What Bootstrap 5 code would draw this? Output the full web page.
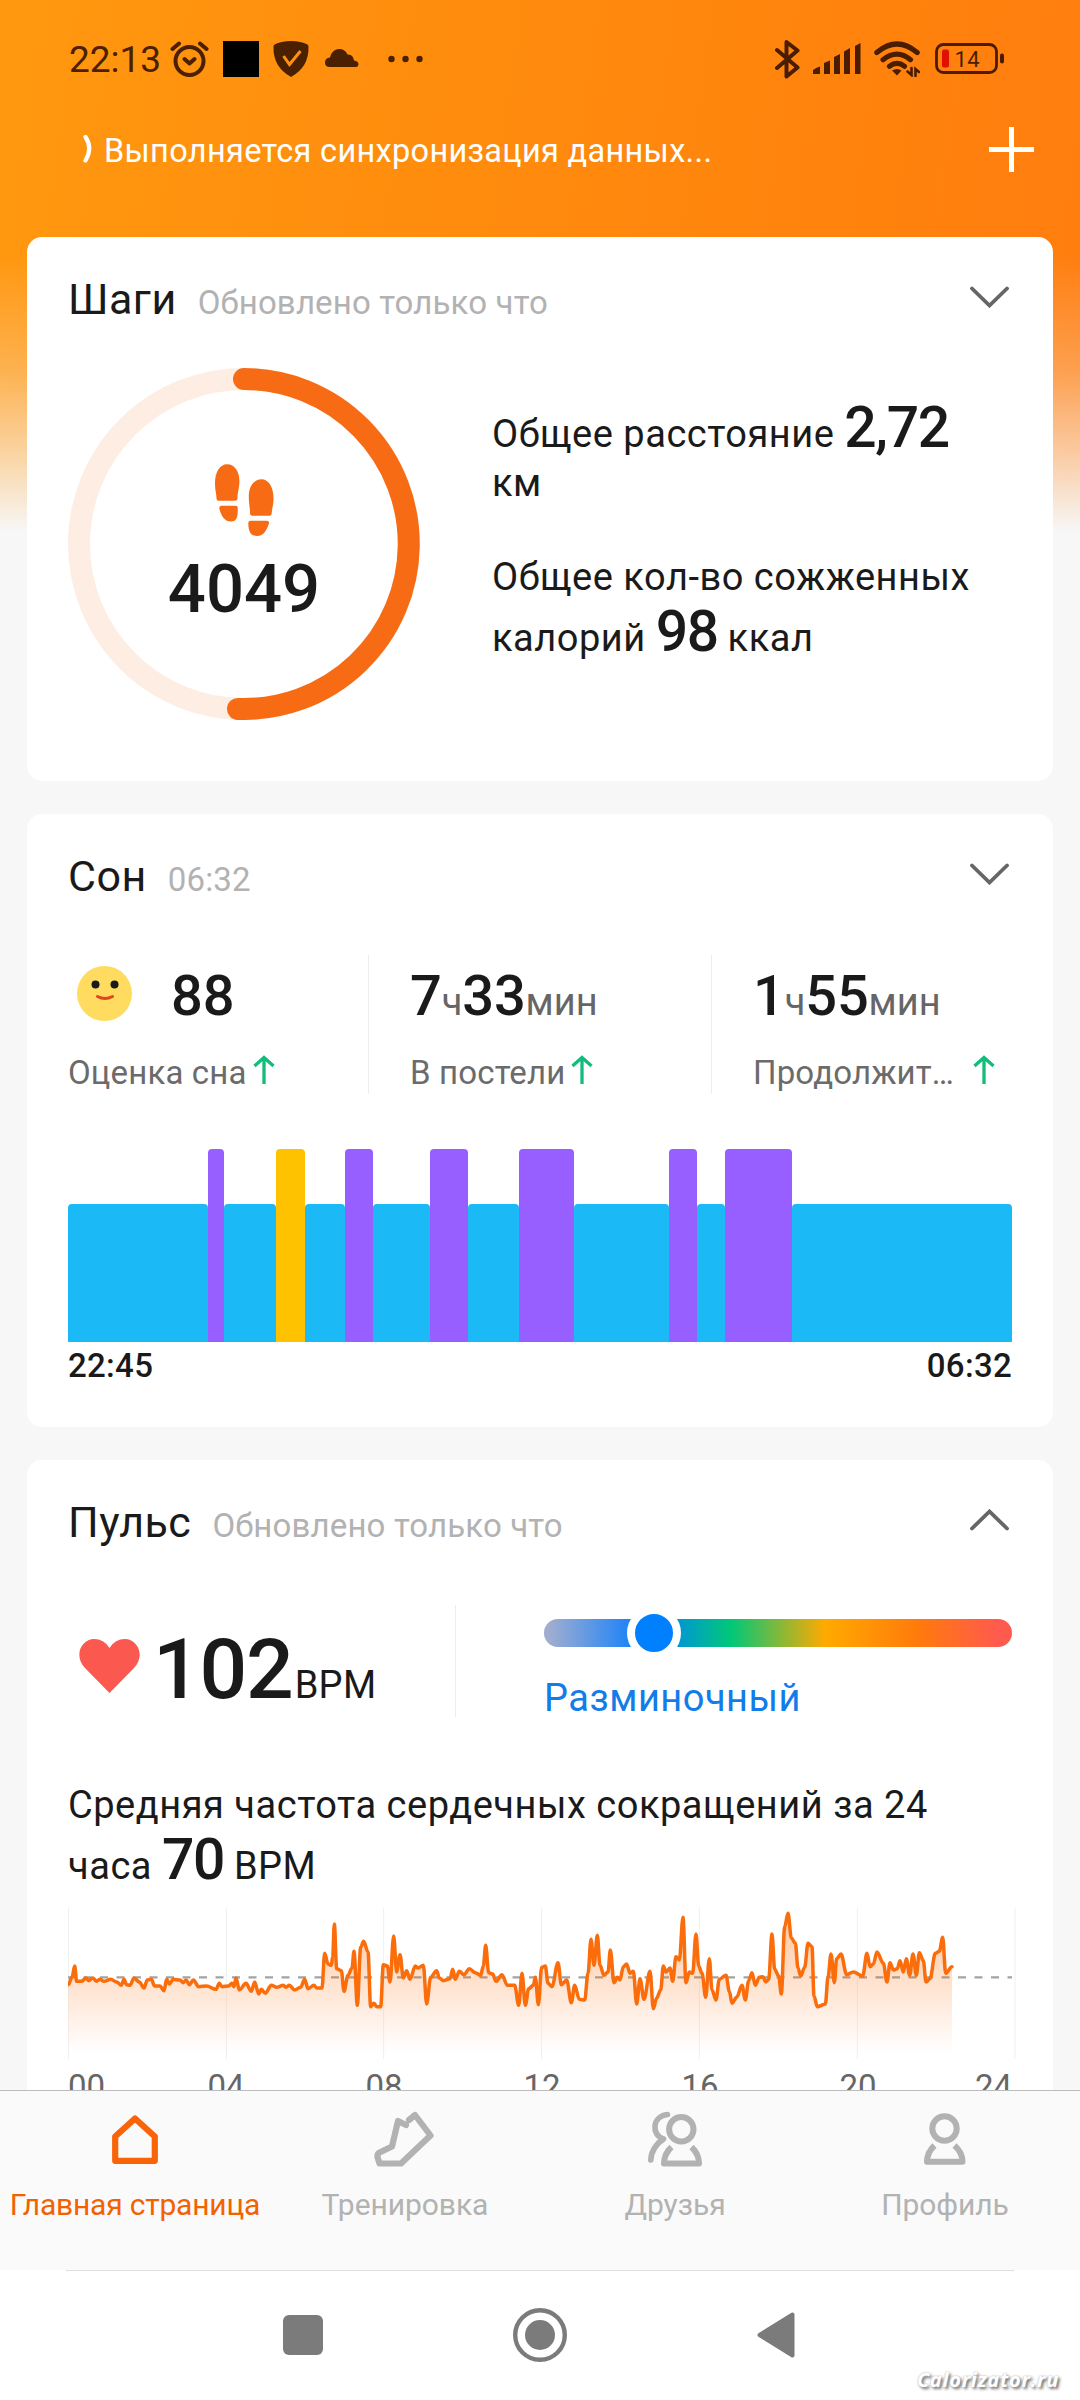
<!DOCTYPE html>
<html lang="ru">
<head>
<meta charset="utf-8">
<meta name="viewport" content="width=device-width, initial-scale=1">
<title>Главная страница</title>
<link href="https://cdn.jsdelivr.net/npm/bootstrap@5.3.0/dist/css/bootstrap.min.css" rel="stylesheet">
<style>
  body { font-family: Roboto, "Noto Sans", sans-serif; color: #1a1a1a; background: #f7f7f7; }
  svg { display: block; flex: none; }
  .phone { width: 1080px; height: 2400px; background: #f7f7f7; }
  .screen { height: 2090px;
    background: linear-gradient(180deg, rgba(247,247,247,0) 255px, rgba(247,247,247,.28) 370px, rgba(247,247,247,.62) 450px, #f7f7f7 532px), linear-gradient(98deg, #ff980f 0, #ff870d 50%, #ff780f 100%); }
  .statusbar { height: 118px; padding-left: 69px; color: #4a2000; }
  .clock { width: 101px; font-size: 37px; font-weight: 450; line-height: 44px; padding-top: 2px; }
  .charge { font-size: 22px; line-height: 30px; letter-spacing: .5px; }
  .sync { height: 62px; margin-bottom: 57px; padding: 0 46px 0 83px; color: #fff; }
  .sync-label { font-size: 32.5px; line-height: 40px; padding: 3px 0 0 11px; letter-spacing: .32px; }
  .panel { width: 1026px; margin: 0 27px 33px; padding: 27px 41px 0; border: 0; border-radius: 15px; background: #fff; color: #1a1a1a; }
  .panel-steps { height: 544px; } .panel-sleep { height: 613px; } .panel-pulse { height: 800px; border-radius: 15px 15px 0 0; }
  .head { height: 70px; }
  .title { font-size: 43px; line-height: 70px; margin: 0; font-weight: 400; letter-spacing: .5px; }
  .updated { font-size: 33px; color: #b2b2b2; margin-left: 21px; letter-spacing: .15px; }
  .chev { margin: 22px 3px 0 auto; }
  .ring { width: 352px; height: 352px; }
  .steps-num { font-size: 67px; font-weight: 500; line-height: 67px; margin-top: 20px; }
  .txt { font-size: 38px; line-height: 61px; margin: 0; letter-spacing: .52px; }
  .txt b { font-size: 57px; line-height: 0; font-weight: 500; letter-spacing: -1.4px; }
  .txt-km { line-height: 49px; margin: 42px 0 39px; }
  .stats { height: 139px; margin-top: 44px; }
  .stat { padding: 11px 0 0 41px; }
  .stat + .stat { border-left: 1px solid #ededed; }
  .val { font-size: 56px; font-weight: 500; line-height: 60px; height: 60px; white-space: nowrap; letter-spacing: -.2px; }
  .val small { font-size: 38px; font-weight: 400; color: #666; letter-spacing: 0; }
  .lbl { font-size: 33px; line-height: 40px; margin-top: 27px; color: #6b6b6b; white-space: nowrap; letter-spacing: .15px; }
  .phases { height: 193px; margin-top: 55px; }
  .ph { height: 138px; border-radius: 4px 4px 0 0; background: #1cb9f7; }
  .ph-rem { height: 193px; background: #975fff; }
  .ph-wake { height: 193px; background: #ffc200; }
  .times { font-size: 33px; font-weight: 500; line-height: 48px; letter-spacing: .3px; }
  .beat { height: 112px; margin-top: 48px; }
  .beat-now { width: 388px; border-right: 1px solid #ededed; }
  .bpm { font-size: 84px; font-weight: 500; line-height: 84px; margin-top: 23px; white-space: nowrap; letter-spacing: -1.2px; }
  .bpm small { font-size: 38px; font-weight: 400; letter-spacing: .3px; margin-left: 2px; }
  .zone { height: 28px; margin-top: 14px; border-radius: 14px;
    background: linear-gradient(90deg, #a0add0 1%, #1380fb 20%, #0080ff 23%, #00c878 40%, #ffaa00 60%, #ff7a0c 80%, #ff5a4e 97%); }
  .knob { width: 54px; height: 54px; left: 83px; top: -13px; border: 8px solid #fff; border-radius: 50%; background: #0080ff; }
  .zone-name { font-size: 38px; line-height: 50px; margin-top: 26px; color: #127ce8; letter-spacing: .5px; }
  .hours { width: 948px; font-size: 33px; line-height: 40px; margin-top: 7px; color: #666; }
  .hours span { width: 158px; text-align: center; }
  .hours span:first-child { width: 79px; text-align: left; }
  .hours span:last-child { width: 75px; text-align: right; }
  .tabs { height: 180px; background: #fafafa; border-top: 1px solid #bdbdbd; }
  .tabs a { width: 270px; padding-top: 18px; color: #b2b2b2; font-size: 30px; line-height: 40px; text-decoration: none; white-space: nowrap; letter-spacing: -.05px; }
  .tabs a.active { color: #f26200; letter-spacing: -.2px; }
  .tab-name { margin-top: 16px; }
  .sysnav { height: 130px; background: #fff; }
  .rule { width: 948px; height: 1px; background: #dedede; }
  .stamp { right: 21px; bottom: 8px; font: italic 700 20px/24px "Open Sans", sans-serif; letter-spacing: .75px; color: #fff; text-shadow: 0 0 2px #aaa, 2px 2px 3px #666; }
</style>
</head>
<body>
<div class="phone overflow-hidden">
  <main class="screen overflow-hidden">
    <div class="statusbar d-flex align-items-center">
      <span class="clock">22:13</span>
      <svg width="39" height="36" viewBox="0 0 39 36" fill="none" stroke="#4a2000" stroke-width="4" stroke-linecap="round" stroke-linejoin="round"><circle cx="19.500" cy="20" r="14"/><path d="M14.500 18l5 4.500 5-4.500M2.500 8L9 2.500M36.500 8L30 2.500"/></svg>
      <svg width="36" height="36" style="margin-left:14px"><path d="M0 0h36v36H0z"/></svg>
      <svg width="36" height="36" viewBox="0 0 36 36" style="margin-left:14px"><path d="M18 0Q28 0 34.500 3.500 35.500 4 35.500 6 36 26 18 36 0 26 .5 6 .5 4 1.500 3.500 8 0 18 0z" fill="#4a2000"/><path d="M10.500 15l6 8.500L27.500 10" fill="none" stroke="#ff9010" stroke-width="3"/></svg>
      <svg width="34" height="36" viewBox="0 0 34 36" style="margin-left:16px"><path d="M5 26Q0 26 0 21.500 0 17 5 16.500 7 8 14.500 8 20 8 22.500 13.500 28 13 29 19.500 33.500 20 33.500 23.500 33 26 31 26z" fill="#4a2000"/></svg>
      <svg width="36" height="8" viewBox="0 0 36 8" style="margin-left:29px" fill="#4a2000"><circle cx="3.500" cy="4" r="3.200"/><circle cx="17.500" cy="4" r="3.200"/><circle cx="31.500" cy="4" r="3.200"/></svg>
      <svg width="25" height="40" viewBox="0 0 25 40" style="margin-left:351px" fill="none" stroke="#4a1c00" stroke-width="4" stroke-linecap="round" stroke-linejoin="round"><path d="M2 11L22.500 28.500 11.500 37.500V3L22.500 11.500 2 29"/></svg>
      <svg width="48" height="32" viewBox="0 0 48 32" style="margin-left:13px" fill="#4a1c00"><path d="M0 31v-4q4-3 7-3.500V31zM11 31V20l6-2.500V31zM21 31V14l6-3v20zM31 31V8.500l6-3.500v26zM42 31V3l5.500-3v31z"/></svg>
      <svg width="46" height="36" viewBox="0 0 46 36" style="margin-left:13px" fill="none" stroke="#4a1c00" stroke-width="5.200" stroke-linecap="round"><path d="M2.800 11.500Q23-5.500 43.200 11.500M9 18.700Q23 7.500 36.500 18.700M15.500 25.200Q23 19.500 30.500 25.200"/><path d="M18 29.500q5-3 9.500 0L23 34.500z" fill="#4a1c00" stroke="none"/><path d="M37.500 27v7l-4-3.500M41.500 35v-7l3.500 3" stroke-width="2.600"/></svg>
      <svg width="70" height="32" viewBox="0 0 70 32" style="margin-left:15px"><rect x="1.500" y="1.500" width="60" height="28" rx="7" fill="none" stroke="#4a1c00" stroke-width="2.800"/><rect x="65" y="10.500" width="4" height="10" rx="2" fill="#4a1c00"/><rect x="7" y="6.500" width="7" height="18" rx="2" fill="#e01000"/><text x="19.500" y="23.500" class="charge" fill="#4a1c00">14</text></svg>
    </div>
    <div class="sync d-flex align-items-center">
      <svg width="10" height="28" viewBox="0 0 10 28"><path d="M2.500 2Q10 13 2.500 25.500" fill="none" stroke="#fff" stroke-width="4.200" stroke-linecap="round"/></svg>
      <span class="sync-label">Выполняется синхронизация данных...</span>
      <svg class="ms-auto" width="45" height="45" viewBox="0 0 45 45"><path d="M22.500 0v45M0 22.500h45" stroke="#fff" stroke-width="5"/></svg>
    </div>

    <section class="card panel panel-steps">
      <div class="head d-flex">
        <div class="d-flex align-items-baseline"><h2 class="title">Шаги</h2><span class="updated">Обновлено только что</span></div>
        <svg class="chev" width="39" height="22" viewBox="0 0 39 22"><path d="M2 2.500l17.500 17L37 2.500" fill="none" stroke="#666" stroke-width="3.800" stroke-linecap="round"/></svg>
      </div>
      <div class="d-flex" style="margin-top:34px">
        <div class="ring position-relative flex-shrink-0">
          <svg class="position-absolute top-0 start-0" width="352" height="352" viewBox="0 0 352 352" fill="none" stroke-width="22"><circle cx="176" cy="176" r="165" stroke="#feede3"/><path d="M176 11A165 165 0 1 1 170 340.900" stroke="#f76b14" stroke-linecap="round"/></svg>
          <div class="d-flex flex-column align-items-center" style="padding-top:96px">
            <svg width="59" height="72" viewBox="0 0 59 72" fill="#f76b14"><path d="M12 0.300C20 .3 24.400 8 24.400 17 24.400 25 22.500 28 22.500 34Q22.500 36.700 20 36.700H3.500Q1.500 36.700 1.500 34.500C1.500 29 0 27 0 19 0 8 5 .3 12 .3zM6.500 41.800H20.500Q22.800 41.800 22.800 44C22.800 53 22 57.500 16 57.500 9 57.500 6 51 4.300 44.500Q4 41.800 6.500 41.800z"/><path d="M46.500 15.300C38.500 15.300 33.800 23 33.800 32 33.800 40 35 43 35 49Q35 51.700 37.500 51.700H54.500Q56.500 51.700 56.700 49.500C57 44 58.500 42 58.500 34 58.500 23 53.500 15.300 46.500 15.300zM52 56.800H35.500Q33.300 56.800 33.300 59C33.300 68 36 72 42 72 49 72 51.500 66 54 59.500Q54.500 56.800 52 56.800z"/></svg>
            <div class="steps-num">4049</div>
          </div>
        </div>
        <div style="padding-left:72px">
          <p class="txt txt-km">Общее расстояние <b>2,72</b><br>км</p>
          <p class="txt">Общее кол-во сожженных<br>калорий <b>98</b> ккал</p>
        </div>
      </div>
    </section>

    <section class="card panel panel-sleep">
      <div class="head d-flex">
        <div class="d-flex align-items-baseline"><h2 class="title">Сон</h2><span class="updated">06:32</span></div>
        <svg class="chev" width="39" height="22" viewBox="0 0 39 22"><path d="M2 2.500l17.500 17L37 2.500" fill="none" stroke="#666" stroke-width="3.800" stroke-linecap="round"/></svg>
      </div>
      <div class="stats d-flex">
        <div class="stat ps-0" style="width:300px">
          <div class="val d-flex"><svg width="55" height="55" viewBox="0 0 55 55" style="margin:0 39px 0 9px"><circle cx="27.500" cy="27.500" r="27.500" fill="#ffdc60"/><circle cx="18.500" cy="18.500" r="4" fill="#1a1a1a"/><circle cx="37.500" cy="18.500" r="4" fill="#1a1a1a"/><path d="M20.500 30.500q7.500 4 15 0" fill="none" stroke="#e0451f" stroke-width="3" stroke-linecap="round"/></svg>88</div>
          <div class="lbl d-flex">Оценка сна<svg style="margin-left:6px" width="22" height="32" viewBox="0 0 22 32"><path d="M11 31V5M1.500 13L11 4.500 20.500 13" fill="none" stroke="#12bd7c" stroke-width="3.300"/></svg></div>
        </div>
        <div class="stat" style="width:343px">
          <div class="val">7<small>ч</small>33<small>мин</small></div>
          <div class="lbl d-flex">В постели<svg style="margin-left:6px" width="22" height="32" viewBox="0 0 22 32"><path d="M11 31V5M1.500 13L11 4.500 20.500 13" fill="none" stroke="#12bd7c" stroke-width="3.300"/></svg></div>
        </div>
        <div class="stat" style="width:300px">
          <div class="val">1<small>ч</small>55<small>мин</small></div>
          <div class="lbl d-flex">Продолжит…<svg style="margin-left:19px" width="22" height="32" viewBox="0 0 22 32"><path d="M11 31V5M1.500 13L11 4.500 20.500 13" fill="none" stroke="#12bd7c" stroke-width="3.300"/></svg></div>
        </div>
      </div>
      <div class="phases d-flex align-items-end">
        <i class="ph" style="width:139.500px"></i><i class="ph ph-rem" style="width:16.500px"></i><i class="ph" style="width:52px"></i><i class="ph ph-wake" style="width:28.500px"></i><i class="ph" style="width:40.500px"></i><i class="ph ph-rem" style="width:28px"></i><i class="ph" style="width:57px"></i><i class="ph ph-rem" style="width:38px"></i><i class="ph" style="width:51px"></i><i class="ph ph-rem" style="width:54.500px"></i><i class="ph" style="width:95px"></i><i class="ph ph-rem" style="width:28.500px"></i><i class="ph" style="width:28px"></i><i class="ph ph-rem" style="width:67px"></i><i class="ph" style="width:220px"></i>
      </div>
      <div class="times d-flex justify-content-between"><span>22:45</span><span>06:32</span></div>
    </section>

    <section class="card panel panel-pulse">
      <div class="head d-flex">
        <div class="d-flex align-items-baseline"><h2 class="title">Пульс</h2><span class="updated">Обновлено только что</span></div>
        <svg class="chev" width="39" height="22" viewBox="0 0 39 22"><path d="M2 19.500l17.500-17L37 19.500" fill="none" stroke="#666" stroke-width="3.800" stroke-linecap="round"/></svg>
      </div>
      <div class="beat d-flex">
        <div class="beat-now d-flex">
          <svg width="61" height="54" viewBox="0 0 61 54" style="margin:34px 13px 0 11px"><path d="M30.500 54L6 29C-6 16 3 0 15 0Q25 0 30.500 9 36 0 46 0C58 0 67 16 55 29z" fill="#fb5850"/></svg>
          <div class="bpm">102<small>BPM</small></div>
        </div>
        <div class="flex-grow-1" style="padding-left:88px">
          <div class="zone position-relative"><div class="knob position-absolute"></div></div>
          <div class="zone-name">Разминочный</div>
        </div>
      </div>
      <p class="txt" style="margin-top:58px">Средняя частота сердечных сокращений за 24<br>часа <b>70</b> BPM</p>
      <svg style="margin-top:8px" width="948" height="155" viewBox="54 45 2844 465">
        <defs><linearGradient id="fade" gradientUnits="userSpaceOnUse" x1="0" y1="70" x2="0" y2="490"><stop offset="0" stop-color="#ff6a00" stop-opacity=".38"/><stop offset="1" stop-color="#ff6a00" stop-opacity="0"/></linearGradient></defs>
        <path d="M55.500 52V507M529 52V507M1001 52V507M1475 52V507M1948 52V507M2422 52V507M2895 52V507" stroke="#f0f0f0" stroke-width="3"/>
        <path d="M51 262H2886" stroke="#a3a3a3" stroke-width="7" stroke-dasharray="24 25.500"/>
        <path id="area" fill="url(#fade)"/>
        <path id="trace" fill="none" stroke="#fb6c0a" stroke-width="10.500" stroke-linejoin="round" stroke-linecap="round"/>
      </svg>
      <div class="hours d-flex"><span>00</span><span>04</span><span>08</span><span>12</span><span>16</span><span>20</span><span>24</span></div>
    </section>
  </main>

  <nav class="tabs d-flex">
    <a class="active d-flex flex-column align-items-center" href="#"><svg width="64" height="60" viewBox="0 0 64 60" fill="none" stroke="#f96408" stroke-width="6.200" stroke-linejoin="round"><path d="M32 9.500L12.200 27.500V51.800H51.800V27.500z"/></svg><span class="tab-name">Главная страница</span></a>
    <a class="d-flex flex-column align-items-center" href="#"><svg width="64" height="60" viewBox="0 0 64 60" fill="none" stroke="#b2b2b2" stroke-width="6.200" stroke-linejoin="round" stroke-linecap="round"><path d="M33 16L25 12 19 37.500 6.500 43.500Q4 45 4.500 48L6.500 54.500H28L57.500 26.500 42 6 36 11"/></svg><span class="tab-name">Тренировка</span></a>
    <a class="d-flex flex-column align-items-center" href="#"><svg width="64" height="60" viewBox="0 0 64 60" fill="none" stroke="#b2b2b2" stroke-width="6" stroke-linejoin="round"><circle cx="38.300" cy="20.300" r="12.200"/><path d="M28.500 38Q21 45 21 54.500H56Q56 45 48.500 38"/><path d="M24.500 5.500C9 7 8 26 20.500 30 14 34 8 42 7.800 51" stroke-linecap="round" stroke-width="5.600"/></svg><span class="tab-name">Друзья</span></a>
    <a class="d-flex flex-column align-items-center" href="#"><svg width="64" height="60" viewBox="0 0 64 60" fill="none" stroke="#b2b2b2" stroke-width="6" stroke-linejoin="round"><circle cx="31.500" cy="19.500" r="12.200"/><path d="M21.500 36.500Q14 43.500 14 52.800H49.500Q49.500 43.500 41.500 36.500"/></svg><span class="tab-name">Профиль</span></a>
  </nav>
  <footer class="sysnav position-relative">
    <div class="rule mx-auto"></div>
    <div class="d-flex align-items-center" style="height:128px;padding-left:283px">
      <svg width="40" height="40"><rect width="40" height="40" rx="6" fill="#7b7b7b"/></svg>
      <svg width="54" height="54" viewBox="0 0 54 54" style="margin-left:190px"><circle cx="27" cy="27" r="24.800" fill="none" stroke="#7b7b7b" stroke-width="4.400"/><circle cx="27" cy="27" r="15" fill="#7b7b7b"/></svg>
      <svg width="38" height="46" viewBox="0 0 38 46" style="margin-left:190px"><path d="M35.500 2.500v41L2.500 23z" fill="#7b7b7b" stroke="#7b7b7b" stroke-width="4" stroke-linejoin="round"/></svg>
    </div>
    <span class="stamp position-absolute">Calorizator.ru</span>
  </footer>
</div>
<script src="https://cdn.jsdelivr.net/npm/bootstrap@5.3.0/dist/js/bootstrap.bundle.min.js"></script>
<script>
  // Heart-rate trace, in chart units
  const trace = "55,284 66,262 74,228 80,274 95,274 108,264 116,272 128,264 140,274 150,268 162,274 182,268 200,276 214,286 222,268 230,284 240,286 252,264 268,276 282,294 292,270 304,268 314,288 330,288 342,302 350,268 358,282 370,268 390,270 400,278 408,270 418,284 430,270 446,290 470,288 498,298 508,280 516,290 536,288 546,280 552,290 558,264 568,300 588,280 604,304 614,276 626,312 634,298 646,310 664,286 680,292 700,286 708,292 718,286 734,300 752,292 764,268 774,296 792,286 800,294 816,294 824,190 834,222 844,226 848,200 853,102 860,236 874,242 882,304 894,256 906,234 912,184 922,346 932,172 941,154 954,186 962,350 972,340 980,350 992,350 1000,224 1012,228 1020,276 1031,138 1040,246 1050,194 1060,264 1070,242 1080,268 1096,228 1104,234 1120,226 1130,342 1142,262 1160,242 1168,264 1180,272 1200,266 1208,238 1216,268 1228,244 1242,254 1258,236 1276,248 1292,256 1300,228 1307,166 1316,248 1328,252 1338,274 1356,254 1372,286 1394,286 1406,346 1416,250 1426,346 1436,296 1450,286 1456,262 1465,344 1475,232 1486,228 1494,280 1506,290 1524,218 1534,284 1550,270 1564,338 1574,286 1588,328 1604,330 1614,250 1623,148 1632,226 1642,136 1650,226 1662,256 1674,246 1681,180 1692,278 1702,262 1710,270 1720,230 1730,222 1740,250 1750,244 1760,342 1770,266 1782,328 1800,244 1810,356 1820,324 1832,300 1840,228 1848,246 1860,234 1868,274 1878,200 1888,210 1899,82 1908,278 1918,246 1928,250 1938,132 1946,228 1956,250 1967,322 1978,206 1986,300 1998,330 2008,268 2028,256 2038,304 2046,340 2060,322 2076,286 2086,330 2096,272 2106,248 2116,286 2128,262 2138,260 2148,276 2156,268 2166,132 2174,238 2186,258 2194,312 2204,110 2214,70 2224,144 2236,160 2244,234 2252,258 2264,232 2274,160 2286,170 2292,318 2302,350 2326,342 2334,262 2343,192 2353,278 2360,206 2373,192 2390,254 2410,246 2438,258 2451,190 2460,230 2470,222 2481,186 2500,220 2511,276 2520,218 2530,240 2542,236 2550,212 2560,246 2569,206 2579,256 2589,192 2599,256 2608,188 2620,212 2628,276 2640,266 2656,190 2668,184 2678,142 2687,250 2706,230";
  // Join samples with short easing curves so peaks stay rounded
  const pts = trace.split(" ").map(p => p.split(",").map(Number));
  let line = "M" + pts[0];
  for (let i = 1; i < pts.length; i++) {
    const [x0, y0] = pts[i - 1], [x1, y1] = pts[i], d = (x1 - x0) * 0.35;
    line += `C${x0 + d},${y0} ${x1 - d},${y1} ${x1},${y1}`;
  }
  document.getElementById("trace").setAttribute("d", line);
  document.getElementById("area").setAttribute("d", line + "V490H55Z");
</script>
</body>
</html>
